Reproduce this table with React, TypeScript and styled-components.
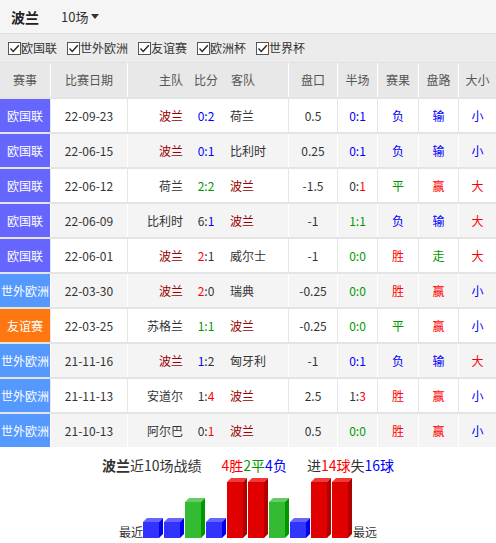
import React from "react";
import styled, { createGlobalStyle } from "styled-components";

const GlobalStyle = createGlobalStyle`
  html, body { margin: 0; padding: 0; background: #fff; }
  body { font-family: "Noto Sans CJK SC", "Noto Sans", sans-serif; color: #333; }
`;

const COLORS: Record<string, string> = {
  d: "#333333",
  r: "#ff0000",
  b: "#0000ff",
  g: "#009900",
  p: "#990000",
};

const LEAGUE_BG: Record<string, string> = {
  欧国联: "#6666ff",
  世外欧洲: "#5599ff",
  友谊赛: "#ff7711",
};

const COLS = "50px 77px 63px 32px 66px 49px 40px 41px 40px 38px";

const Page = styled.div`
  width: 496px;
`;

const TopBar = styled.div`
  height: 33px;
  display: flex;
  align-items: center;
  padding-left: 11px;
  background: #f5f5f5;
  border-bottom: 1px solid #dfdfdf;
`;

const TeamTitle = styled.span`
  font-size: 14px;
  font-weight: bold;
  color: #222;
`;

const Picker = styled.span`
  margin-left: 22px;
  font-size: 13px;
  color: #333;
  display: inline-flex;
  align-items: center;
  gap: 3px;
`;

const Caret = styled.span`
  width: 0;
  height: 0;
  border-left: 4px solid transparent;
  border-right: 4px solid transparent;
  border-top: 5px solid #333;
`;

const FilterRow = styled.div`
  height: 28px;
  display: flex;
  align-items: center;
  gap: 10px;
  padding-left: 8px;
  background: #ececec;
  border-bottom: 1px solid #e2e2e2;
`;

const FilterItem = styled.label`
  display: inline-flex;
  align-items: center;
  font-size: 12px;
  line-height: 14px;
  color: #333;
`;

const Box = styled.span`
  width: 11px;
  height: 11px;
  border: 1px solid #555;
  background: #fff;
  display: inline-flex;
  align-items: center;
  justify-content: center;
`;

const Row = styled.div<{ $bg: string; $head?: boolean }>`
  display: grid;
  grid-template-columns: ${COLS};
  height: ${(p) => (p.$head ? "34px" : "33px")};
  background: ${(p) => p.$bg};
  border-top: ${(p) => (p.$head ? "none" : "2px solid #e4e4e4")};
  font-size: 12px;
  line-height: 16px;
`;

const Cell = styled.div<{
  $align?: "left" | "right" | "center";
  $div?: string;
  $bg?: string;
  $color?: string;
  $pad?: string;
}>`
  display: flex;
  align-items: center;
  justify-content: ${(p) =>
    p.$align === "left" ? "flex-start" : p.$align === "right" ? "flex-end" : "center"};
  padding: ${(p) => p.$pad || "0"};
  border-left: ${(p) => (p.$div ? `1px solid ${p.$div}` : "none")};
  background: ${(p) => p.$bg || "transparent"};
  color: ${(p) => p.$color || "#333"};
  white-space: nowrap;
  overflow: hidden;
`;

const HeadText = styled.span`
  color: #555;
`;

const Seg = styled.span<{ $c: string }>`
  color: ${(p) => COLORS[p.$c]};
`;

const Summary = styled.div`
  display: flex;
  flex-direction: column;
  align-items: center;
  padding-top: 8px;
`;

const SummaryTitle = styled.div`
  font-size: 14px;
  line-height: 20px;
  color: #333;
`;

const Gap = styled.span`
  margin-left: 20px;
`;

const Bold = styled.span`
  font-weight: bold;
`;

const ChartRow = styled.div`
  display: flex;
  align-items: flex-end;
  margin-top: 2px;
`;

const ChartLabel = styled.span`
  font-size: 12px;
  line-height: 13px;
  color: #333;
`;

type Seg = [string, string];
interface Match {
  lg: string;
  date: string;
  home: string;
  away: string;
  score: Seg[];
  hc: string;
  ht: Seg[];
  res: [string, string];
  pl: [string, string];
  ou: [string, string];
}

const W: [string, string] = ["胜", "r"];
const D: [string, string] = ["平", "g"];
const L: [string, string] = ["负", "b"];
const WIN: [string, string] = ["赢", "r"];
const LOSE: [string, string] = ["输", "b"];
const PUSH: [string, string] = ["走", "g"];
const BIG: [string, string] = ["大", "r"];
const SMALL: [string, string] = ["小", "b"];

const matches: Match[] = [
  { lg: "欧国联", date: "22-09-23", home: "波兰", away: "荷兰", score: [["0:2", "b"]], hc: "0.5", ht: [["0:1", "b"]], res: L, pl: LOSE, ou: SMALL },
  { lg: "欧国联", date: "22-06-15", home: "波兰", away: "比利时", score: [["0:1", "b"]], hc: "0.25", ht: [["0:1", "b"]], res: L, pl: LOSE, ou: SMALL },
  { lg: "欧国联", date: "22-06-12", home: "荷兰", away: "波兰", score: [["2:2", "g"]], hc: "-1.5", ht: [["0:", "d"], ["1", "r"]], res: D, pl: WIN, ou: BIG },
  { lg: "欧国联", date: "22-06-09", home: "比利时", away: "波兰", score: [["6:", "d"], ["1", "b"]], hc: "-1", ht: [["1:1", "g"]], res: L, pl: LOSE, ou: BIG },
  { lg: "欧国联", date: "22-06-01", home: "波兰", away: "威尔士", score: [["2", "r"], [":1", "d"]], hc: "-1", ht: [["0:0", "g"]], res: W, pl: PUSH, ou: BIG },
  { lg: "世外欧洲", date: "22-03-30", home: "波兰", away: "瑞典", score: [["2", "r"], [":0", "d"]], hc: "-0.25", ht: [["0:0", "g"]], res: W, pl: WIN, ou: SMALL },
  { lg: "友谊赛", date: "22-03-25", home: "苏格兰", away: "波兰", score: [["1:1", "g"]], hc: "-0.25", ht: [["0:0", "g"]], res: D, pl: WIN, ou: SMALL },
  { lg: "世外欧洲", date: "21-11-16", home: "波兰", away: "匈牙利", score: [["1", "b"], [":2", "d"]], hc: "-1", ht: [["0:1", "b"]], res: L, pl: LOSE, ou: BIG },
  { lg: "世外欧洲", date: "21-11-13", home: "安道尔", away: "波兰", score: [["1:", "d"], ["4", "r"]], hc: "2.5", ht: [["1:", "d"], ["3", "r"]], res: W, pl: WIN, ou: SMALL },
  { lg: "世外欧洲", date: "21-10-13", home: "阿尔巴", away: "波兰", score: [["0:", "d"], ["1", "r"]], hc: "0.5", ht: [["0:0", "g"]], res: W, pl: WIN, ou: SMALL },
];

const filters = ["欧国联", "世外欧洲", "友谊赛", "欧洲杯", "世界杯"];

const Check = () => (
  <svg width="11" height="11" viewBox="0 0 11 11">
    <polyline points="1.5,5.5 4.2,8.5 9.8,2.2" fill="none" stroke="#222" strokeWidth="1.3" />
  </svg>
);

const Segs = ({ segs }: { segs: Seg[] }) => (
  <span>
    {segs.map(([t, c], i) => (
      <Seg key={i} $c={c}>
        {t}
      </Seg>
    ))}
  </span>
);

const BAR_FACES: Record<string, [string, string, string]> = {
  L: ["#3333ff", "#6666ff", "#0000ee"],
  D: ["#33bb33", "#66cc66", "#009900"],
  W: ["#e00000", "#f03a3a", "#b00000"],
};
const BAR_H: Record<string, number> = { L: 16, D: 36, W: 56 };

const Chart = ({ seq }: { seq: string[] }) => {
  const H = 61;
  return (
    <svg width={210} height={H} viewBox={`0 0 210 ${H}`}>
      {seq.map((k, i) => {
        const x = i * 21;
        const h = BAR_H[k];
        const top = H - h;
        const [front, topC, side] = BAR_FACES[k];
        return (
          <g key={i}>
            <rect x={x} y={top} width={16} height={h} fill={front} />
            <polygon points={`${x},${top} ${x + 4},${top - 4} ${x + 20},${top - 4} ${x + 16},${top}`} fill={topC} />
            <polygon points={`${x + 16},${top} ${x + 20},${top - 4} ${x + 20},${H - 4} ${x + 16},${H}`} fill={side} />
          </g>
        );
      })}
    </svg>
  );
};

export default function App() {
  const seq = matches.map((m) => (m.res[0] === "胜" ? "W" : m.res[0] === "平" ? "D" : "L"));
  return (
    <Page>
      <GlobalStyle />
      <TopBar>
        <TeamTitle>波兰</TeamTitle>
        <Picker>
          10场
          <Caret />
        </Picker>
      </TopBar>
      <FilterRow>
        {filters.map((f) => (
          <FilterItem key={f}>
            <Box>
              <Check />
            </Box>
            {f}
          </FilterItem>
        ))}
      </FilterRow>
      <Row $bg="#e8e8e8" $head>
        <Cell><HeadText>赛事</HeadText></Cell>
        <Cell $div="#fff"><HeadText>比赛日期</HeadText></Cell>
        <Cell $div="#fff" $align="right" $pad="0 7px 0 0"><HeadText>主队</HeadText></Cell>
        <Cell><HeadText>比分</HeadText></Cell>
        <Cell $align="left" $pad="0 0 0 9px"><HeadText>客队</HeadText></Cell>
        <Cell $div="#fff"><HeadText>盘口</HeadText></Cell>
        <Cell $div="#fff"><HeadText>半场</HeadText></Cell>
        <Cell $div="#fff"><HeadText>赛果</HeadText></Cell>
        <Cell $div="#fff"><HeadText>盘路</HeadText></Cell>
        <Cell $div="#fff"><HeadText>大小</HeadText></Cell>
      </Row>
      {matches.map((m, i) => {
        const odd = i % 2 === 1;
        const bg = odd ? "#f4f4f4" : "#ffffff";
        const dv = odd ? "#ffffff" : "#e6e6e6";
        return (
          <Row key={i} $bg={bg}>
            <Cell $bg={LEAGUE_BG[m.lg]} $color="#fff">{m.lg}</Cell>
            <Cell $div={dv}>{m.date}</Cell>
            <Cell $div={dv} $align="right" $pad="0 7px 0 0" $color={m.home === "波兰" ? COLORS.p : "#333"}>
              {m.home}
            </Cell>
            <Cell><Segs segs={m.score} /></Cell>
            <Cell $align="left" $pad="0 0 0 8px" $color={m.away === "波兰" ? COLORS.p : "#333"}>
              {m.away}
            </Cell>
            <Cell $div={dv}>{m.hc}</Cell>
            <Cell $div={dv}><Segs segs={m.ht} /></Cell>
            <Cell $div={dv} $color={COLORS[m.res[1]]}>{m.res[0]}</Cell>
            <Cell $div={dv} $color={COLORS[m.pl[1]]}>{m.pl[0]}</Cell>
            <Cell $div={dv} $color={COLORS[m.ou[1]]}>{m.ou[0]}</Cell>
          </Row>
        );
      })}
      <Summary>
        <SummaryTitle>
          <Bold>波兰</Bold>近10场战绩
          <Gap>
            <Seg $c="r">4胜</Seg>
            <Seg $c="g">2平</Seg>
            <Seg $c="b">4负</Seg>
          </Gap>
          <Gap>
            进<Seg $c="r">14球</Seg>失<Seg $c="b">16球</Seg>
          </Gap>
        </SummaryTitle>
        <ChartRow>
          <ChartLabel>最近</ChartLabel>
          <Chart seq={seq} />
          <ChartLabel>最远</ChartLabel>
        </ChartRow>
      </Summary>
    </Page>
  );
}
